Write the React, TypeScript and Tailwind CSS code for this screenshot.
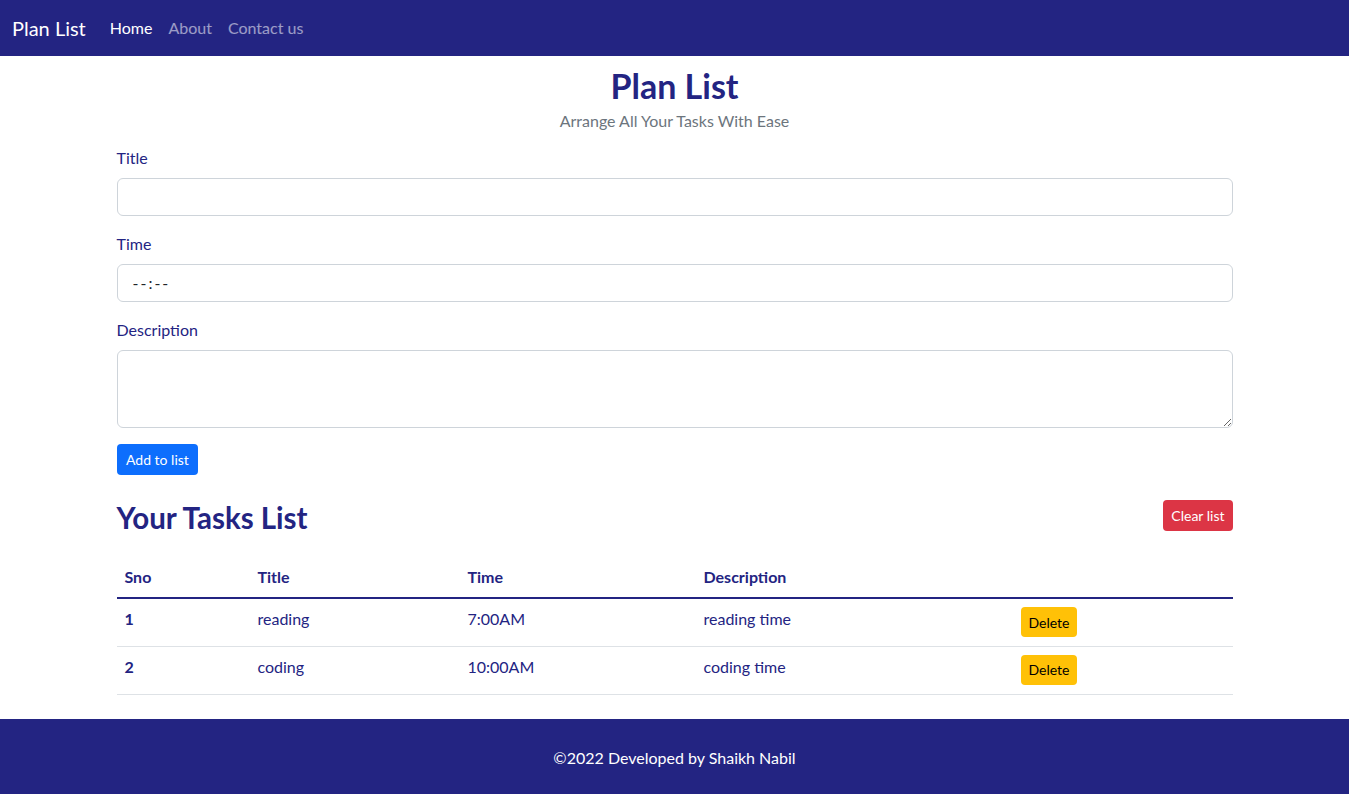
import React from "react";

const tasks = [
  { sno: 1, title: "reading", time: "7:00AM", desc: "reading time" },
  { sno: 2, title: "coding", time: "10:00AM", desc: "coding time" },
];

export default function App() {
  return (
    <div className="min-h-[794px] flex flex-col bg-white text-[#232482] font-['Lato','Noto_Sans',sans-serif]">
      {/* Navbar */}
      <nav className="h-[56px] bg-[#232482] flex items-center px-3">
        <span className="text-white text-[20px] mr-4">Plan List</span>
        <div className="flex text-[16px]">
          <a className="px-2 text-white">Home</a>
          <a className="px-2 text-white/55">About</a>
          <a className="px-2 text-white/55">Contact us</a>
        </div>
      </nav>

      <main className="w-[1116px] mx-auto">
        <h1 className="text-center text-[34px] font-bold leading-[40px] mt-[10px]">Plan List</h1>
        <p className="text-center text-[16px] leading-6 text-[#6c757d] mt-[3px]">Arrange All Your Tasks With Ease</p>

        <form className="mt-[13px]" onSubmit={(e) => e.preventDefault()}>
          <div className="mb-4">
            <label className="block text-[16px] leading-6 mb-2">Title</label>
            <input type="text" className="block w-full h-[38px] border border-[#ced4da] rounded-[6px] px-3 outline-none" />
          </div>
          <div className="mb-4">
            <label className="block text-[16px] leading-6 mb-2">Time</label>
            <div className="w-full h-[38px] border border-[#ced4da] rounded-[6px] pl-[15px] flex items-center text-[#212529] text-[16px]">
              <span className="tracking-[2px]">--:--</span>
            </div>
          </div>
          <div className="mb-4">
            <label className="block text-[16px] leading-6 mb-2">Description</label>
            <textarea className="block w-full h-[78px] border border-[#ced4da] rounded-[6px] px-3 py-1.5 outline-none" />
          </div>
          <button className="h-[31px] px-[9.5px] rounded-[4px] bg-[#0d6efd] text-white text-[14px]">Add to list</button>
        </form>

        <div className="flex justify-between items-start mt-[25px]">
          <h2 className="text-[29.5px] font-bold leading-[33px] mt-[1px]">Your Tasks List</h2>
          <button className="h-[31px] px-2 rounded-[4px] bg-[#dc3545] text-white text-[14px]">Clear list</button>
        </div>

        <table className="w-full mt-[23px] border-collapse text-left text-[16px]">
          <thead>
            <tr className="border-b-2 border-[#232482]">
              <th className="w-[133px] px-2 py-2 leading-6 font-bold">Sno</th>
              <th className="w-[210px] px-2 py-2 leading-6 font-bold">Title</th>
              <th className="w-[236px] px-2 py-2 leading-6 font-bold">Time</th>
              <th className="w-[317px] px-2 py-2 leading-6 font-bold">Description</th>
              <th className="px-2 py-2 leading-6"></th>
            </tr>
          </thead>
          <tbody>
            {tasks.map((t) => (
              <tr key={t.sno} className="border-b border-[#dee2e6] h-[48px] align-top">
                <th className="px-2 pt-2 leading-6 font-bold">{t.sno}</th>
                <td className="px-2 pt-2 leading-6">{t.title}</td>
                <td className="px-2 pt-2 leading-6">{t.time}</td>
                <td className="px-2 pt-2 leading-6">{t.desc}</td>
                <td className="px-2 pt-2">
                  <button className="h-[30px] px-2 rounded-[4px] bg-[#ffc107] text-black text-[14px]">Delete</button>
                </td>
              </tr>
            ))}
          </tbody>
        </table>
      </main>

      <footer className="mt-auto bg-[#232482] text-white text-center text-[16px] leading-6 pt-[27px] pb-[24px]">
        ©2022 Developed by Shaikh Nabil
      </footer>
    </div>
  );
}
